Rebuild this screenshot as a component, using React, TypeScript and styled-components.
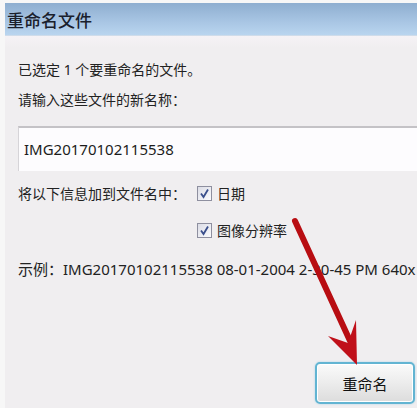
import styled, { createGlobalStyle } from "styled-components";

const GlobalStyle = createGlobalStyle`
  html, body {
    margin: 0;
    padding: 0;
    background: #f6f6f6;
  }
  body {
    font-family: "Noto Sans", "Noto Sans CJK SC", sans-serif;
  }
`;

function App() {
  return (
    <>
      <GlobalStyle />
      <Screen>
        <Dialog>
          <TitleBar>重命名文件</TitleBar>
          <Body>
            <Line>已选定 1 个要重命名的文件。</Line>
            <Line>请输入这些文件的新名称：</Line>
            <NameInput defaultValue="IMG20170102115538" />
            <OptionRow>
              <OptionLabel>将以下信息加到文件名中：</OptionLabel>
              <Check>
                <Box>
                  <Tick />
                </Box>
                日期
              </Check>
            </OptionRow>
            <OptionRow $indent>
              <Check>
                <Box>
                  <Tick />
                </Box>
                图像分辨率
              </Check>
            </OptionRow>
            <Example>示例：IMG20170102115538 08-01-2004 2-30-45 PM 640x</Example>
            <Footer>
              <RenameButton>重命名</RenameButton>
            </Footer>
          </Body>
          <Arrow viewBox="0 0 417 408" aria-hidden>
            <line
              x1="295"
              y1="221"
              x2="351"
              y2="343"
              stroke="#b80d12"
              strokeWidth="6"
              strokeLinecap="round"
            />
            <path d="M357 365 L328 336 L348 343 L356 320 Z" fill="#c0101a" />
          </Arrow>
        </Dialog>
      </Screen>
    </>
  );
}

function Tick() {
  return (
    <svg width="11" height="11" viewBox="0 0 11 11">
      <path
        d="M2 5.5 L4.5 9 L9 1.5"
        fill="none"
        stroke="#3a4f8c"
        strokeWidth="1.8"
      />
    </svg>
  );
}

const Screen = styled.div`
  width: 417px;
  height: 408px;
  overflow: hidden;
  padding-left: 5px;
  padding-top: 3px;
  box-sizing: border-box;
  background: #f7f7f7;
`;

const Dialog = styled.div`
  position: relative;
  height: 100%;
  display: flex;
  flex-direction: column;
  background: #f0eef0;
`;

const TitleBar = styled.div`
  height: 32px;
  flex-shrink: 0;
  display: flex;
  align-items: center;
  padding-left: 2px;
  font-family: "Noto Sans CJK SC", sans-serif;
  font-size: 17px;
  font-weight: 500;
  color: #1a202c;
  background: linear-gradient(#8eaed0, #a9c6e4 60%, #b9d5ef);
  border-bottom: 1px solid #cfdcea;
`;

const Body = styled.div`
  flex: 1;
  display: flex;
  flex-direction: column;
  padding: 19px 0 4px 13px;
  background: linear-gradient(#f5f2f6, #f0eef0 12px);
  font-family: "Noto Sans", "Noto Sans CJK SC", sans-serif;
  font-size: 14px;
  color: #222;
`;

const Line = styled.div`
  height: 30px;
  line-height: 30px;
  white-space: nowrap;
`;

const NameInput = styled.input`
  margin-top: 11px;
  height: 45px;
  width: 420px;
  box-sizing: border-box;
  border: none;
  border-top: 2px solid #c4c2c6;
  border-left: 1px solid #d6d4d8;
  background: #fdfcfe;
  padding: 0 0 2px 5px;
  font-family: "Noto Sans", sans-serif;
  font-size: 15px;
  color: #1c1c1c;
  outline: none;
`;

const OptionRow = styled.div<{ $indent?: boolean }>`
  display: flex;
  align-items: center;
  height: 24px;
  margin-top: ${({ $indent }) => ($indent ? "13px" : "10px")};
  padding-left: ${({ $indent }) => ($indent ? "179px" : "0")};
  white-space: nowrap;
`;

const OptionLabel = styled.span`
  width: 179px;
`;

const Check = styled.label`
  display: flex;
  align-items: center;
  gap: 5px;
`;

const Box = styled.span`
  width: 13px;
  height: 13px;
  border: 1px solid #8e8f9f;
  background: linear-gradient(135deg, #dcdde6, #fafafd);
  display: flex;
  align-items: center;
  justify-content: center;
`;

const Example = styled.div`
  margin-top: 15px;
  white-space: nowrap;
  line-height: 24px;
  font-size: 15px;
`;

const Footer = styled.div`
  margin-top: auto;
  display: flex;
  justify-content: flex-end;
`;

const RenameButton = styled.button`
  width: 100px;
  height: 42px;
  margin-right: 2px;
  border: 2px solid #62b4d2;
  border-radius: 5px;
  box-shadow: 0 0 2px #9fd2e6, inset 0 0 0 1px #ffffff;
  background: linear-gradient(#fafafa, #ececec 50%, #dcdcdc);
  font-family: "Noto Sans CJK SC", sans-serif;
  font-size: 15px;
  color: #111;
`;

const Arrow = styled.svg`
  position: absolute;
  left: -5px;
  top: -3px;
  width: 417px;
  height: 408px;
  pointer-events: none;
`;

export default App;
